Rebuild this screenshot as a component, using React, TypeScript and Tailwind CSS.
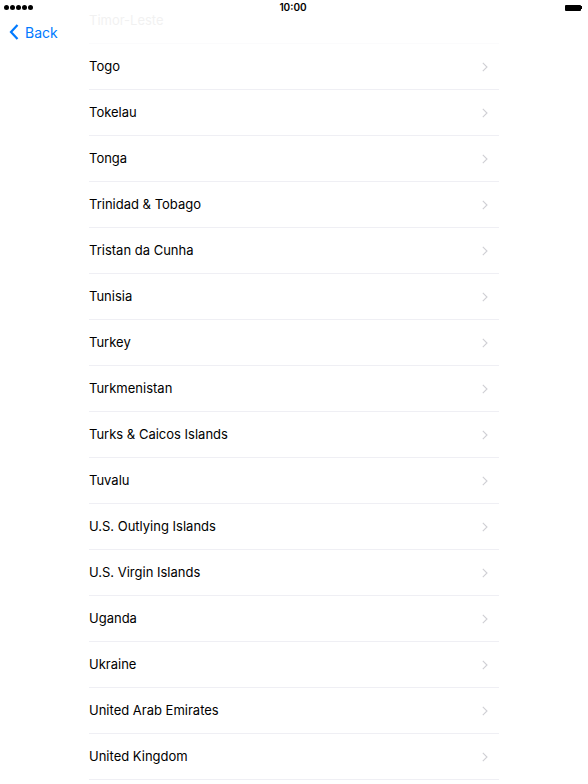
const countries = [
  'Togo',
  'Tokelau',
  'Tonga',
  'Trinidad & Tobago',
  'Tristan da Cunha',
  'Tunisia',
  'Turkey',
  'Turkmenistan',
  'Turks & Caicos Islands',
  'Tuvalu',
  'U.S. Outlying Islands',
  'U.S. Virgin Islands',
  'Uganda',
  'Ukraine',
  'United Arab Emirates',
  'United Kingdom',
];

function Chevron() {
  return (
    <svg width="6" height="10" viewBox="0 0 6 10" className="shrink-0">
      <path d="M0.8 0.8 L5 5 L0.8 9.2" fill="none" stroke="#cfcfd4" strokeWidth="1.1" />
    </svg>
  );
}

export default function App() {
  return (
    <div className="relative w-[588px] h-[784px] overflow-hidden bg-white font-['Inter',sans-serif]">
      {/* list, scrolled so Timor-Leste sits under the bar */}
      <div className="pl-[89px] pr-[89px] -mt-[2px]">
        <div className="h-[46px] flex items-center border-b border-[#f6f6f8] text-[13px] text-[#dcdcdc]">
          Timor-Leste
        </div>
        {countries.map((c) => (
          <div
            key={c}
            className="h-[46px] flex items-center justify-between border-b border-[#efeff4] pr-[11px]"
          >
            <span className="text-[13px] text-black">{c}</span>
            <Chevron />
          </div>
        ))}
      </div>

      {/* status + nav bar */}
      <div className="absolute top-0 left-0 right-0 h-[44px] bg-white/60">
        <div className="h-[15px] flex items-center px-[4px]">
          <div className="flex-1 flex gap-[1px]">
            {[0, 1, 2, 3, 4].map((i) => (
              <span key={i} className="w-[5px] h-[5px] rounded-full bg-black" />
            ))}
          </div>
          <span className="text-[10px] font-semibold text-black">10:00</span>
          <div className="flex-1 flex items-center justify-end mr-[2px]">
            <div className="w-[16px] h-[6px] bg-black rounded-[1px]" />
            <div className="w-[1px] h-[3px] bg-black" />
          </div>
        </div>
        <div className="flex items-center h-[34px] pl-[9px] gap-[6px]">
          <svg width="10" height="16" viewBox="0 0 10 16">
            <path d="M8.5 1 L2 8 L8.5 15" fill="none" stroke="#007aff" strokeWidth="2.2" />
          </svg>
          <span className="text-[14px] text-[#007aff]">Back</span>
        </div>
      </div>
    </div>
  );
}
